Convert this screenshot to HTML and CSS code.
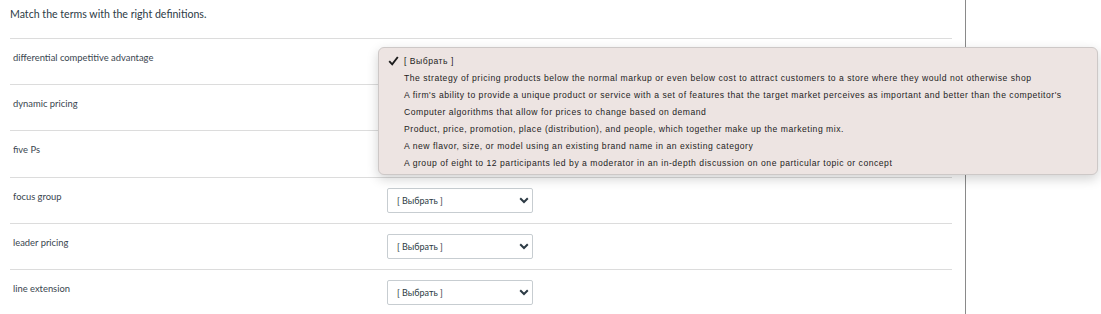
FILE: index.html
```html
<!DOCTYPE html>
<html>
<head>
  <title>Matching question</title>
  <link rel="stylesheet" href="styles.css">
</head>
<body>
  <div class="page">
    <div class="main">
      <p class="prompt">Match the terms with the right definitions.</p>

      <!-- Answer rows -->
      <div class="row">
        <div class="term">differential competitive advantage</div>
        <div class="answer">
          <div class="select covered">
            <span>[ Выбрать ]</span>
            <svg class="chevron" width="10" height="7" viewBox="0 0 10 7"><path d="M1.2 1.3 L5 5 L8.8 1.3" fill="none" stroke="#2d3b45" stroke-width="2"/></svg>
          </div>

          <!-- Open option menu -->
          <div class="menu">
            <div class="option selected">
              <svg class="check" width="11" height="10" viewBox="0 0 11 10"><path d="M1.2 5.2 L4.2 8.3 L9.8 1" fill="none" stroke="#1c1c1c" stroke-width="1.9"/></svg>
              [ Выбрать ]
            </div>
            <div class="option">The strategy of pricing products below the normal markup or even below cost to attract customers to a store where they would not otherwise shop</div>
            <div class="option">A firm's ability to provide a unique product or service with a set of features that the target market perceives as important and better than the competitor's</div>
            <div class="option">Computer algorithms that allow for prices to change based on demand</div>
            <div class="option">Product, price, promotion, place (distribution), and people, which together make up the marketing mix.</div>
            <div class="option">A new flavor, size, or model using an existing brand name in an existing category</div>
            <div class="option">A group of eight to 12 participants led by a moderator in an in-depth discussion on one particular topic or concept</div>
          </div>
        </div>
      </div>

      <div class="row">
        <div class="term">dynamic pricing</div>
        <div class="answer">
          <div class="select covered">
            <span>[ Выбрать ]</span>
            <svg class="chevron" width="10" height="7" viewBox="0 0 10 7"><path d="M1.2 1.3 L5 5 L8.8 1.3" fill="none" stroke="#2d3b45" stroke-width="2"/></svg>
          </div>
        </div>
      </div>

      <div class="row">
        <div class="term">five Ps</div>
        <div class="answer">
          <div class="select covered">
            <span>[ Выбрать ]</span>
            <svg class="chevron" width="10" height="7" viewBox="0 0 10 7"><path d="M1.2 1.3 L5 5 L8.8 1.3" fill="none" stroke="#2d3b45" stroke-width="2"/></svg>
          </div>
        </div>
      </div>

      <div class="row">
        <div class="term">focus group</div>
        <div class="answer">
          <div class="select">
            <span>[ Выбрать ]</span>
            <svg class="chevron" width="10" height="7" viewBox="0 0 10 7"><path d="M1.2 1.3 L5 5 L8.8 1.3" fill="none" stroke="#2d3b45" stroke-width="2"/></svg>
          </div>
        </div>
      </div>

      <div class="row">
        <div class="term">leader pricing</div>
        <div class="answer">
          <div class="select">
            <span>[ Выбрать ]</span>
            <svg class="chevron" width="10" height="7" viewBox="0 0 10 7"><path d="M1.2 1.3 L5 5 L8.8 1.3" fill="none" stroke="#2d3b45" stroke-width="2"/></svg>
          </div>
        </div>
      </div>

      <div class="row">
        <div class="term">line extension</div>
        <div class="answer">
          <div class="select">
            <span>[ Выбрать ]</span>
            <svg class="chevron" width="10" height="7" viewBox="0 0 10 7"><path d="M1.2 1.3 L5 5 L8.8 1.3" fill="none" stroke="#2d3b45" stroke-width="2"/></svg>
          </div>
        </div>
      </div>
    </div>

    <div class="sidebar"></div>
  </div>
</body>
</html>
```

FILE: styles.css
```css
/* Page reset */
html, body {
  height: 100%;
  margin: 0;
  padding: 0;
}

body {
  background-color: #fff;
  color: #2d3b45;
  font-family: Lato, "Liberation Sans", sans-serif;
  overflow: hidden;
}

/* Two columns: question + right rail */
.page {
  display: flex;
  height: 100%;
}

.main {
  width: 942px;
  padding-left: 10px;
  margin-right: 13px;
}

.sidebar {
  flex-grow: 1;
  border-left: 1px solid #8a8a8a;
}

.prompt {
  margin: 7px 0 17px;
  font-size: 10.6px;
  line-height: 14px;
}

/* Rows */
.row {
  display: flex;
  height: 46.2px;
  box-sizing: border-box;
  border-top: 1px solid #dcdcdc;
}

.term {
  width: 374px;
  padding: 12px 0 0 3px;
  font-size: 9.4px;
  line-height: 13px;
  color: #3a464f;
}

.answer {
  position: relative;
  padding-top: 10px;
}

/* Closed select */
.select {
  display: flex;
  align-items: center;
  justify-content: space-between;
  width: 146px;
  height: 25px;
  box-sizing: border-box;
  padding: 0 3px 0 9px;
  border: 1px solid #c7cdd1;
  border-radius: 2px;
  font-size: 9px;
  color: #2d3b45;
}

/* hidden behind the open menu */
.select.covered span {
  visibility: hidden;
}

/* Open menu overlay */
.menu {
  position: absolute;
  top: 8px;
  left: -9px;
  z-index: 2;
  width: 720px;
  height: 128px;
  box-sizing: border-box;
  padding: 4px 0;
  background-color: #ede4e2;
  border: 1px solid #cdc8c7;
  border-radius: 6px;
  box-shadow: 0 4px 12px rgba(0, 0, 0, 0.18);
  font-family: "Liberation Sans", sans-serif;
  font-size: 8.6px;
  color: #1d1d1d;
}

.option {
  position: relative;
  height: 17px;
  line-height: 17px;
  padding-left: 25px;
  white-space: nowrap;
  letter-spacing: 0.52px;
}

.option.selected {
  height: 18px;
  line-height: 18px;
}

.check {
  position: absolute;
  left: 9px;
  top: 4px;
}
```
